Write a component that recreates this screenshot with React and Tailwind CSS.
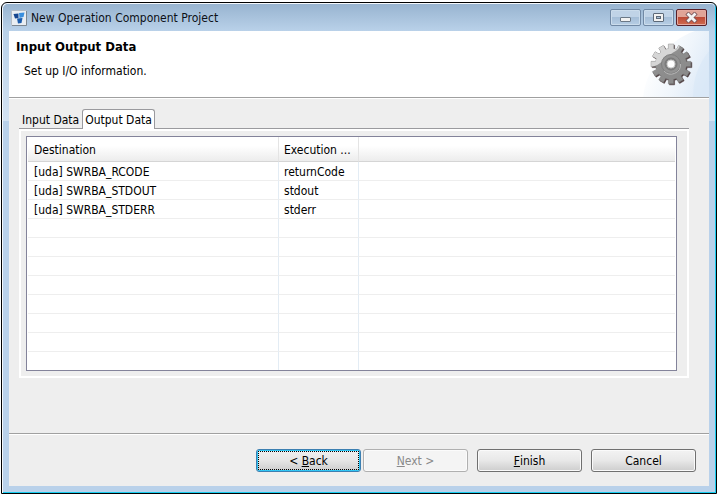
import { useState } from "react";

const ROWS = [
  ["[uda] SWRBA_RCODE", "returnCode"],
  ["[uda] SWRBA_STDOUT", "stdout"],
  ["[uda] SWRBA_STDERR", "stderr"],
];
const BLANK_ROWS = [0, 1, 2, 3, 4, 5, 6];

function gearPath(cx, cy, outer, inner, teeth) {
  const points = [];
  const step = (Math.PI * 2) / teeth;
  const at = (angle, r) =>
    `${(cx + Math.cos(angle) * r).toFixed(2)},${(cy + Math.sin(angle) * r).toFixed(2)}`;
  for (let i = 0; i < teeth; i += 1) {
    const a = i * step - Math.PI / 2;
    points.push(at(a - step * 0.32, inner));
    points.push(at(a - step * 0.25, outer));
    points.push(at(a + step * 0.25, outer));
    points.push(at(a + step * 0.32, inner));
  }
  return `M${points.join("L")}Z`;
}

const GEAR = gearPath(28, 27, 20, 15.5, 12);
const GEAR_SHADOW = gearPath(29, 28, 20, 15.5, 12);

function WizardArt() {
  return (
    <svg width="66" height="66" viewBox="0 -6 66 66" className="block shrink-0" aria-hidden="true">
      <defs>
        <linearGradient id="sky" x1="0" y1="0.3" x2="1" y2="0.7">
          <stop offset="0.1" stopColor="#fff" />
          <stop offset="0.6" stopColor="#eff5fb" />
          <stop offset="1" stopColor="#dce9f7" />
        </linearGradient>
        <linearGradient id="steel" x1="0" y1="0" x2="1" y2="1">
          <stop offset="0" stopColor="#9c9c9c" />
          <stop offset="0.5" stopColor="#8d8d8d" />
          <stop offset="1" stopColor="#8a8a8a" />
        </linearGradient>
        <clipPath id="gearClip"><path d={GEAR} /></clipPath>
      </defs>
      <path d="M0 60C3 34 22 4 52 -6H66V60Z" fill="url(#sky)" />
      <path d="M50 60C50 42 55 28 66 14V60Z" fill="#d9e7f6" opacity="0.6" />
      <path d={GEAR_SHADOW} fill="#4c3c3e" stroke="#4c3c3e" strokeWidth="0.5" />
      <path d={GEAR} fill="url(#steel)" stroke="#777" strokeWidth="0.6" />
      <path d="M2 31C18 30 20 22 28 17S38 12 36 2H2Z" fill="#d6d6d6" clipPath="url(#gearClip)" />
      <circle cx="28" cy="27" r="9.500" fill="#939393" stroke="#7e7e7e" />
      <path d="M21 34A9.500 9.500 0 0 0 37.500 27" fill="none" stroke="#b5b5b5" />
      <circle cx="28" cy="27" r="6" fill="#858585" stroke="#777" />
      <circle cx="28" cy="27" r="4" fill="#fff" stroke="#ccc" />
    </svg>
  );
}

function AppIcon() {
  return (
    <svg width="16" height="16" viewBox="0 0 16 16" className="shrink-0" aria-hidden="true">
      <rect x="0.500" y="0.500" width="15" height="15" rx="1" fill="#e9eef3" stroke="#b4bcc5" />
      <path d="M1 15.500H15.500V1" fill="none" stroke="#7d8791" />
      <path d="M8 3L13.500 2.500L12.500 7L8.500 8Z" fill="#3a8fde" />
      <path d="M2.500 4L7.500 3.500V8L4 8.500Z" fill="#15458f" />
      <path d="M6 8.500L11.500 8L10.500 13L7 13.500Z" fill="#1b5cad" />
    </svg>
  );
}

function CaptionButton({ label, close, children }) {
  return (
    <button
      type="button"
      aria-label={label}
      className={`flex h-[17px] w-[31px] items-center justify-center rounded-[2px] border ${
        close
          ? "border-[#5a2028] bg-linear-to-b from-[#e0a497] from-45% via-[#bd4a36] via-50% to-[#cf6b50] shadow-[inset_0_0_0_1px_#e5aaa0]"
          : "border-[#7189a5] bg-linear-to-b from-[#c0d3e7] from-45% via-[#a5bed8] via-50% to-[#b7cee5] shadow-[inset_0_0_0_1px_#cbdcec]"
      }`}
    >
      <svg width="13" height="11" viewBox="0 0 13 11" aria-hidden="true">{children}</svg>
    </button>
  );
}

function DialogButton({ variant = "normal", children }) {
  const looks = {
    normal:
      "border-[#707070] bg-linear-to-b from-[#f3f3f3] via-[#e8e8e8] via-50% to-[#cdcdcd] shadow-[inset_0_0_0_1px_#fafafa]",
    focus:
      "border-[#3c7fb1] bg-linear-to-b from-[#f0f0f0] via-[#e6e6e6] via-50% to-[#cdcdcd] shadow-[inset_0_0_0_1px_#2fc6f4]",
    disabled: "border-[#b0b0b0] bg-[#f4f4f4] text-[#8a8a8a] shadow-[inset_0_0_0_1px_#fbfbfb]",
  };
  return (
    <button
      type="button"
      disabled={variant === "disabled"}
      className={`grid h-[23px] w-[105px] rounded-[3px] border p-px ${looks[variant]}`}
    >
      <span
        className={`flex items-center justify-center whitespace-pre border border-dotted ${
          variant === "focus" ? "border-black" : "border-transparent"
        }`}
      >
        {children}
      </span>
    </button>
  );
}

function Tab({ selected, onClick, children }) {
  return (
    <button
      type="button"
      role="tab"
      aria-selected={selected}
      onClick={onClick}
      className={`-mb-px h-5 rounded-t-[3px] border border-b-0 px-[2px] ${
        selected ? "border-[#9a9a9e] bg-white" : "border-transparent"
      }`}
    >
      {children}
    </button>
  );
}

export default function App() {
  const [tab, setTab] = useState("output");
  const rows = tab === "output" ? ROWS : [];
  return (
    <div className="flex min-h-screen flex-col bg-white pt-[2px] pr-[2px] pb-px pl-px font-['DejaVu_Sans_Condensed','DejaVu_Sans',sans-serif] text-[12px] leading-4 text-black">
      <div className="flex flex-1 flex-col rounded-t-[6px] border border-black bg-[#b9d1ea] shadow-[inset_1px_1px_0_#f4f8fc,inset_-1px_-1px_0_#18cdf0]">
        <header className="mx-px mt-px flex h-[27px] items-center gap-1 rounded-t-[5px] bg-linear-to-b from-[#98b4d0] to-[#b9d1e9] pr-2 pl-2">
          <AppIcon />
          <h1 className="flex-1 truncate text-[#0c1016]">New Operation Component Project</h1>
          <div className="flex gap-[2px]">
            <CaptionButton label="Minimize">
              <rect x="1.500" y="5.500" width="10" height="4" rx="0.500" fill="#f2f2f2" stroke="#6b7886" />
            </CaptionButton>
            <CaptionButton label="Maximize">
              <rect x="1.500" y="1.500" width="10" height="8" rx="0.500" fill="#f2f2f2" stroke="#5c6978" />
              <rect x="4.500" y="4.500" width="4" height="2" fill="#a9c0d8" stroke="#5c6978" />
            </CaptionButton>
            <CaptionButton label="Close" close>
              <path d="M3.500 2.500L9.500 8.500M9.500 2.500L3.500 8.500" stroke="#7a5458" strokeWidth="4.400" strokeLinecap="square" />
              <path d="M3.500 2.500L9.500 8.500M9.500 2.500L3.500 8.500" stroke="#f3f3f3" strokeWidth="2.800" strokeLinecap="square" />
            </CaptionButton>
          </div>
        </header>

        <div className="mx-px mb-px flex flex-1 flex-col bg-linear-to-b from-[#b9d1e9] via-[#d3e2f2] via-[90px] to-[#b9d1ea] to-[90px] px-[6px] pb-[6px]">
          <main className="flex flex-1 flex-col bg-[#eee]">
            <section className="flex justify-between border-b border-[#a0a0a0] bg-white">
              <div className="pt-2 pl-[7px]">
                <h2 className="text-[13px] font-bold">Input Output Data</h2>
                <p className="pt-2 pl-2">Set up I/O information.</p>
              </div>
              <WizardArt />
            </section>

            <section className="flex flex-1 flex-col border-t border-white pt-[10px] pr-5 pb-[55px] pl-[10px]">
              <div role="tablist" aria-label="Data" className="flex border-b border-[#9a9a9e]">
                <Tab selected={tab === "input"} onClick={() => setTab("input")}>Input Data</Tab>
                <Tab selected={tab === "output"} onClick={() => setTab("output")}>Output Data</Tab>
              </div>
              <div role="tabpanel" className="flex-1 border-2 border-white py-[5px] pr-[10px] pl-[5px]">
                <div className="border border-[#83839a] bg-white px-px">
                  <table className="w-full table-fixed border-separate border-spacing-0 text-left">
                    <colgroup>
                      <col className="w-[251px]" />
                      <col className="w-20" />
                      <col />
                    </colgroup>
                    <thead>
                      <tr className="h-[25px] bg-linear-to-b from-white from-35% to-[#ebebeb]">
                        <th className="border-r border-b border-r-[#e4e4e4] border-b-[#d5d5d5] p-0 pt-[2px] pl-[6px] font-normal">Destination</th>
                        <th className="border-r border-b border-r-[#e4e4e4] border-b-[#d5d5d5] p-0 pt-[2px] pl-[5px] font-normal whitespace-nowrap">Execution ...</th>
                        <td className="border-b border-[#d5d5d5] p-0" />
                      </tr>
                    </thead>
                    <tbody>
                      {rows.map(([destination, execution]) => (
                        <tr key={destination} className="h-[19px]">
                          <td className="border-r border-b border-r-[#e3ecf4] border-b-[#eee] p-0 pt-[2px] pl-[6px]">{destination}</td>
                          <td className="border-r border-b border-r-[#e3ecf4] border-b-[#eee] p-0 pt-[2px] pl-[5px]">{execution}</td>
                          <td className="border-b border-[#eee] p-0" />
                        </tr>
                      ))}
                      {BLANK_ROWS.map((n) => (
                        <tr key={n} className="h-[19px]">
                          <td className="border-r border-b border-r-[#e3ecf4] border-b-[#eee] p-0" />
                          <td className="border-r border-b border-r-[#e3ecf4] border-b-[#eee] p-0" />
                          <td className="border-b border-[#eee] p-0" />
                        </tr>
                      ))}
                      <tr className="h-[18px]">
                        <td className="border-r border-[#e3ecf4] p-0" />
                        <td className="border-r border-[#e3ecf4] p-0" />
                        <td className="p-0" />
                      </tr>
                    </tbody>
                  </table>
                </div>
              </div>
            </section>

            <footer className="border-t border-[#a0a0a0]">
              <div className="flex justify-end gap-[9px] border-t border-white pt-[14px] pr-[13px] pb-[14px]">
                <div className="flex gap-[2px]">
                  <DialogButton variant="focus">{"< "}<u>B</u>ack</DialogButton>
                  <DialogButton variant="disabled"><u>N</u>{"ext >"}</DialogButton>
                </div>
                <DialogButton><u>F</u>inish</DialogButton>
                <DialogButton>Cancel</DialogButton>
              </div>
            </footer>
          </main>
        </div>
      </div>
    </div>
  );
}
